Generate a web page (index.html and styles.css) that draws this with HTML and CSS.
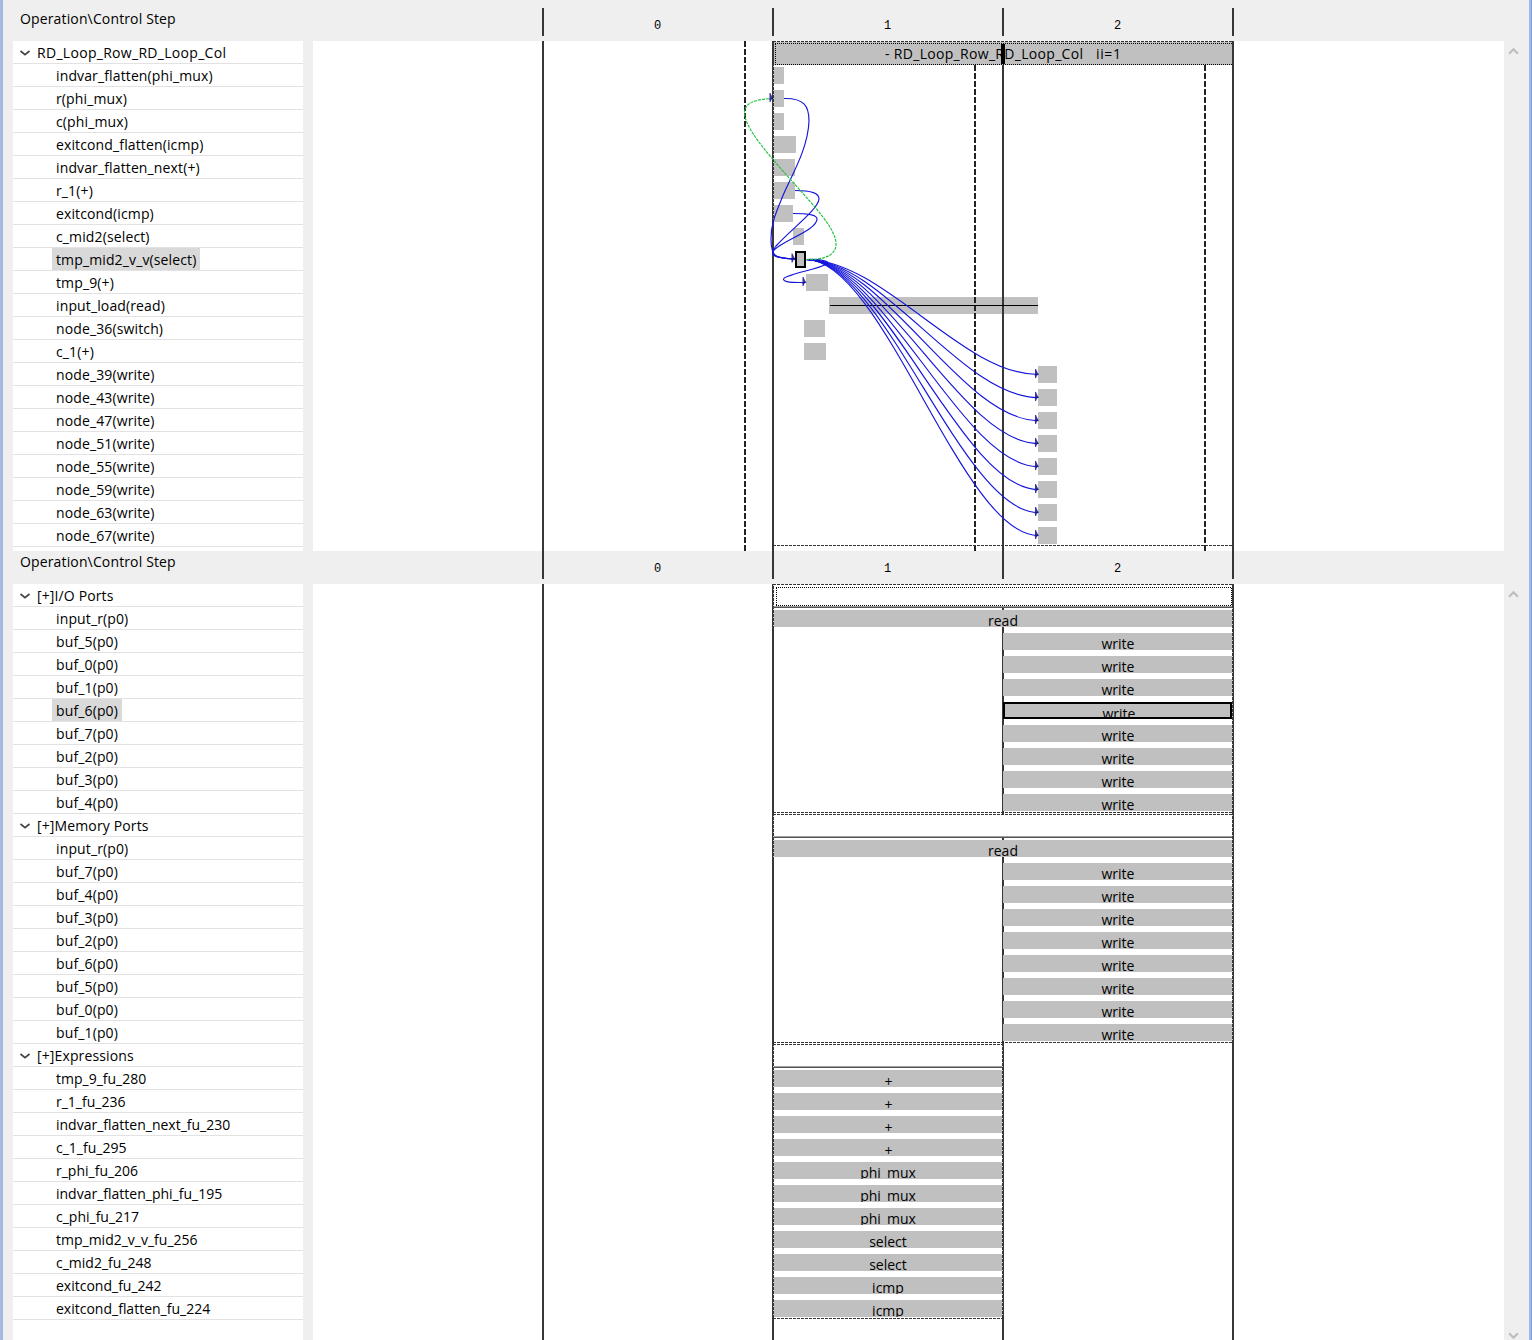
FILE: index.html
```
<!DOCTYPE html>
<html lang="en">
<head>
<meta charset="utf-8">
<title>Schedule Viewer</title>
<link rel="stylesheet" href="styles.css">
</head>
<body>
<main class="window">
  <section class="panel panel-schedule">
    <div class="side">
      <h2 class="title">Operation\Control Step</h2>
      <ul class="tree">
        <li class="group loop"><svg class="chev" viewBox="0 0 12 8"><path d="M1.500 2L6 5.600L10.500 2"/></svg><span>RD_Loop_Row_RD_Loop_Col</span></li>
        <li><span>indvar_flatten(phi_mux)</span></li>
        <li><span>r(phi_mux)</span></li>
        <li><span>c(phi_mux)</span></li>
        <li><span>exitcond_flatten(icmp)</span></li>
        <li><span>indvar_flatten_next(+)</span></li>
        <li><span>r_1(+)</span></li>
        <li><span>exitcond(icmp)</span></li>
        <li><span>c_mid2(select)</span></li>
        <li class="selected"><span>tmp_mid2_v_v(select)</span></li>
        <li><span>tmp_9(+)</span></li>
        <li><span>input_load(read)</span></li>
        <li><span>node_36(switch)</span></li>
        <li><span>c_1(+)</span></li>
        <li><span>node_39(write)</span></li>
        <li><span>node_43(write)</span></li>
        <li><span>node_47(write)</span></li>
        <li><span>node_51(write)</span></li>
        <li><span>node_55(write)</span></li>
        <li><span>node_59(write)</span></li>
        <li><span>node_63(write)</span></li>
        <li><span>node_67(write)</span></li>
      </ul>
    </div>
    <div class="chart">
      <div class="steps"><span></span><span>0</span><span>1</span><span>2</span><span></span></div>
      <svg class="canvas" width="1191" height="510" viewBox="313 41 1191 510">
        <defs>
          <path id="tip" d="M-4 -5.500L-3 -5.500L-1.500 -2L0 0L-2 1L-3 3.500L-4 3.500L-4 1L-5 0.500L-4 0z"/>
        </defs>
        <g class="fill">
          <path d="M774 42h458v23h-458z"/>
          <path d="M774 67h10v17h-10zM774 90h10v17h-10zM774 113h10v17h-10zM774 136h22v17h-22zM774 159h21v17h-21zM774 182h21v17h-21zM774 205h19v17h-19zM793 228h11v17h-11z"/>
          <path d="M806 274h22v17h-22zM829 297h209v17h-209zM804 320h21v17h-21zM804 343h22v17h-22z"/>
          <path d="M1038 366h19v17h-19zM1038 389h19v17h-19zM1038 412h19v17h-19zM1038 435h19v17h-19zM1038 458h19v17h-19zM1038 481h19v17h-19zM1038 504h19v17h-19zM1038 527h19v17h-19z"/>
        </g>
        <g class="column">
          <path d="M543 41V551M773 41V551M1003 65V551M1233 41V551"/>
        </g>
        <path class="clock" d="M745 41V551M975 65V551M1205 65V551"/>
        <path class="dash" d="M773 41.500H1233M773 545.500H1233"/>
        <path class="dots" d="M775 43.500H1232M775 64.500H1232M775.500 44V64"/>
        <path class="dots light" d="M773.500 66V222"/>
        <text class="label" x="885" y="59" textLength="198">- RD_Loop_Row_RD_Loop_Col</text>
        <text class="label" x="1096" y="59" textLength="25">ii=1</text>
        <path class="divider" d="M1003 44V64"/>
        <path class="through" d="M830 305.500H1038"/>
        <g class="wire">
          <path d="M784 98.500C804 98 809 106 809 121C808 150 790 178 782 198C774 217 771 226 771 239C771 256 775 259 795 259"/>
          <path d="M795 190.500C812 190.500 819 193 819 199C818 210 790 230 776 246C769 255 772 258 795 259"/>
          <path d="M793 213.500C810 213.500 817 215 817 219C817 230 784 240 774 250C770 256 777 258 795 259"/>
          <path d="M806 259.500C820 259 832 261 826 264.500C815 270 783 275 783.500 279.500C784 282.500 792 282.500 805 282.500"/>
          <path d="M806 259.500C883 259.500 962 374.500 1038 374.500"/>
          <path d="M806 259.500C883 259.500 962 397.500 1038 397.500"/>
          <path d="M806 259.500C883 259.500 962 420.500 1038 420.500"/>
          <path d="M806 259.500C883 259.500 962 443.500 1038 443.500"/>
          <path d="M806 259.500C883 259.500 962 466.500 1038 466.500"/>
          <path d="M806 259.500C883 259.500 962 489.500 1038 489.500"/>
          <path d="M806 259.500C883 259.500 962 512.500 1038 512.500"/>
          <path d="M806 259.500C883 259.500 962 535.500 1038 535.500"/>
        </g>
        <path class="wire back" d="M806 259.500C827 260 836 254 836 244C836 229 816 208 790 179C767 153 744 127 744.500 112C745 102 758 99 773 98.500"/>
        <g class="tips">
          <use href="#tip" x="773.500" y="98.500"/>
          <use href="#tip" x="795.500" y="259"/>
          <use href="#tip" x="806.500" y="282.500"/>
          <use href="#tip" x="1039" y="374.500"/>
          <use href="#tip" x="1039" y="397.500"/>
          <use href="#tip" x="1039" y="420.500"/>
          <use href="#tip" x="1039" y="443.500"/>
          <use href="#tip" x="1039" y="466.500"/>
          <use href="#tip" x="1039" y="489.500"/>
          <use href="#tip" x="1039" y="512.500"/>
          <use href="#tip" x="1039" y="535.500"/>
        </g>
        <rect class="picked" x="796" y="252" width="9" height="15"/>
      </svg>
    </div>
    <div class="scroll"><svg class="arrow" viewBox="0 0 10 8"><path d="M1 6L5 2L9 6"/></svg></div>
  </section>

  <section class="panel panel-resource">
    <div class="side">
      <h2 class="title">Operation\Control Step</h2>
      <ul class="tree">
        <li class="group"><svg class="chev" viewBox="0 0 12 8"><path d="M1.500 2L6 5.600L10.500 2"/></svg><span>[+]I/O Ports</span></li>
        <li><span>input_r(p0)</span></li>
        <li><span>buf_5(p0)</span></li>
        <li><span>buf_0(p0)</span></li>
        <li><span>buf_1(p0)</span></li>
        <li class="selected"><span>buf_6(p0)</span></li>
        <li><span>buf_7(p0)</span></li>
        <li><span>buf_2(p0)</span></li>
        <li><span>buf_3(p0)</span></li>
        <li><span>buf_4(p0)</span></li>
        <li class="group"><svg class="chev" viewBox="0 0 12 8"><path d="M1.500 2L6 5.600L10.500 2"/></svg><span>[+]Memory Ports</span></li>
        <li><span>input_r(p0)</span></li>
        <li><span>buf_7(p0)</span></li>
        <li><span>buf_4(p0)</span></li>
        <li><span>buf_3(p0)</span></li>
        <li><span>buf_2(p0)</span></li>
        <li><span>buf_6(p0)</span></li>
        <li><span>buf_5(p0)</span></li>
        <li><span>buf_0(p0)</span></li>
        <li><span>buf_1(p0)</span></li>
        <li class="group"><svg class="chev" viewBox="0 0 12 8"><path d="M1.500 2L6 5.600L10.500 2"/></svg><span>[+]Expressions</span></li>
        <li class="unit"><span>tmp_9_fu_280</span></li>
        <li class="unit"><span>r_1_fu_236</span></li>
        <li class="unit"><span>indvar_flatten_next_fu_230</span></li>
        <li class="unit"><span>c_1_fu_295</span></li>
        <li class="unit"><span>r_phi_fu_206</span></li>
        <li class="unit"><span>indvar_flatten_phi_fu_195</span></li>
        <li class="unit"><span>c_phi_fu_217</span></li>
        <li class="unit"><span>tmp_mid2_v_v_fu_256</span></li>
        <li class="unit"><span>c_mid2_fu_248</span></li>
        <li class="unit"><span>exitcond_fu_242</span></li>
        <li class="unit"><span>exitcond_flatten_fu_224</span></li>
      </ul>
    </div>
    <div class="chart">
      <div class="steps"><span></span><span>0</span><span>1</span><span>2</span><span></span></div>
      <div class="usage">
        <svg class="grid" width="1191" height="756" viewBox="313 584 1191 756">
          <path class="column" d="M543 584V1340M773 584V1340M1003 608V815M1003 838V1340M1233 584V1340"/>
          <path class="dash" d="M773 584.500H1233M773 812.500H1233M773 814.500H1233M773 1042.500H1233M773 1044.500H1003M773 1318.500H1003"/>
          <path class="rule-top" d="M774 606.500H1232M774 836.500H1232M774 1066.500H1002"/>
          <path class="rule" d="M773 607.500H1232M773 837.500H1232M773 1067.500H1002"/>
          <path class="dots light" d="M773.500 585V628M773.500 816V858M773.500 1046V1317M1232.500 608V812M1232.500 815V1042M1002.500 1046V1317"/>
          <path class="dots" d="M776 587.500H1232M776 605.500H1232M776.500 588V605M1231.500 588V605"/>
        </svg>
        <div class="bars">
          <i class="head"></i>
          <b class="wide">read</b>
          <b class="late">write</b>
          <b class="late">write</b>
          <b class="late">write</b>
          <b class="late chosen">write</b>
          <b class="late">write</b>
          <b class="late">write</b>
          <b class="late">write</b>
          <b class="late">write</b>
          <i class="head"></i>
          <b class="wide">read</b>
          <b class="late">write</b>
          <b class="late">write</b>
          <b class="late">write</b>
          <b class="late">write</b>
          <b class="late">write</b>
          <b class="late">write</b>
          <b class="late">write</b>
          <b class="late">write</b>
          <i class="head"></i>
          <b class="early plus">+</b>
          <b class="early plus">+</b>
          <b class="early plus">+</b>
          <b class="early plus">+</b>
          <b class="early">phi_mux</b>
          <b class="early">phi_mux</b>
          <b class="early">phi_mux</b>
          <b class="early">select</b>
          <b class="early">select</b>
          <b class="early">icmp</b>
          <b class="early">icmp</b>
        </div>
      </div>
    </div>
    <div class="scroll"><svg class="arrow" viewBox="0 0 10 8"><path d="M1 6L5 2L9 6"/></svg><svg class="arrow" viewBox="0 0 10 8"><path d="M1 2L5 6L9 2"/></svg></div>
  </section>
</main>
</body>
</html>
```
FILE: styles.css
```
* {
  box-sizing: border-box;
}

body {
  margin: 0;
  font-family: "Open Sans", "Noto Sans", sans-serif;
  font-size: 14px;
  color: #000;
}

.window {
  width: 1532px;
  height: 1340px;
  overflow: hidden;
  display: flex;
  flex-direction: column;
  background: #efefef;
  border-left: 1px solid #b4b9c4;
  border-right: 1px solid #7f9fd8;
  box-shadow: inset 2px 0 #9db9ef, inset -2px 0 #9db9ef;
}

.panel {
  display: flex;
  flex: none;
  padding-left: 12px;
}

.panel-schedule {
  height: 551px;
  padding-top: 8px;
}

.panel-resource {
  height: 789px;
}

.side {
  width: 290px;
  margin-right: 10px;
  display: flex;
  flex-direction: column;
}

.title {
  margin: 0;
  height: 33px;
  flex: none;
  padding-left: 7px;
  font-size: 14px;
  font-weight: 400;
  line-height: 21px;
  letter-spacing: 0.14px;
}

.tree {
  flex: 1;
  min-height: 0;
  overflow: hidden;
  margin: 0;
  padding: 0;
  list-style: none;
  background: #fff;
}

.tree li {
  height: 23px;
  padding-left: 39px;
  display: flex;
  border-bottom: 1px solid #e2e2e2;
  line-height: 24px;
  letter-spacing: 0.13px;
}

.tree li span {
  height: 22px;
  padding: 0 4px;
  white-space: nowrap;
}

.tree .group {
  padding-left: 6px;
}

.tree .group span {
  padding-left: 6px;
}

.tree .loop {
  letter-spacing: 0.3px;
}

.tree .unit {
  letter-spacing: 0;
}

.tree .selected span {
  background: #d9d9d9;
}

.chev {
  width: 12px;
  height: 8px;
  margin-top: 8px;
  fill: none;
  stroke: #444;
  stroke-width: 1.7;
}

.chart {
  width: 1191px;
}

.steps {
  height: 33px;
  display: flex;
  padding-bottom: 5px;
}

.steps span {
  width: 230px;
  border-right: 2px solid #373737;
  padding-right: 1px;
  font-family: "Liberation Mono", monospace;
  font-size: 12px;
  line-height: 36px;
  text-align: center;
}

.steps span:first-child {
  width: 231px;
}

.steps span:last-child {
  border: 0;
}

.canvas,
.grid {
  display: block;
  background: #fff;
}

.fill {
  fill: #c0c0c0;
}

.column {
  fill: none;
  stroke: #373737;
  stroke-width: 2;
}

.clock {
  stroke: #222;
  stroke-width: 2;
  stroke-dasharray: 6 2;
}

.dash {
  stroke: #333;
  stroke-dasharray: 3 1;
}

.dots {
  fill: none;
  stroke: #000;
  stroke-dasharray: 1 1;
}

.dots.light {
  stroke: #c8c8c8;
  stroke-dasharray: 1 3;
}

.divider {
  stroke: #000;
  stroke-width: 4;
}

.through {
  stroke: #000;
}

.rule-top {
  stroke: #a0a0a0;
}

.rule {
  stroke: #555;
}

.wire {
  fill: none;
  stroke: #1414dc;
  stroke-width: 1.15;
}

.wire.back {
  stroke: #1ec03c;
  stroke-dasharray: 3 1;
}

.tips {
  fill: #14148c;
  fill-opacity: 0.85;
}

.picked {
  fill: #c0c0c0;
  stroke: #000;
  stroke-width: 2;
}

.usage {
  display: grid;
}

.grid,
.bars {
  grid-area: 1 / 1;
}

.bars {
  padding-left: 461px;
  display: flex;
  flex-direction: column;
  gap: 6px;
  padding-top: 3px;
}

.bars .head {
  height: 17px;
}

.bars b {
  height: 17px;
  overflow: hidden;
  background: #c0c0c0;
  font-weight: 400;
  line-height: 22px;
  text-align: center;
}

.bars .wide {
  width: 458px;
}

.bars .early {
  width: 228px;
}

.bars .plus {
  padding-left: 1px;
  line-height: 24px;
}

.bars .late {
  width: 229px;
  margin-left: 229px;
  padding-left: 1px;
}

.bars .chosen {
  border: 2px solid #000;
  padding-left: 3px;
  line-height: 20px;
}

.scroll {
  width: 25px;
  display: flex;
  flex-direction: column;
  justify-content: space-between;
  padding: 39px 0 0 4px;
}

.arrow {
  width: 11px;
  height: 9px;
  fill: none;
  stroke: #bdbdbd;
  stroke-width: 1.9;
}
```
